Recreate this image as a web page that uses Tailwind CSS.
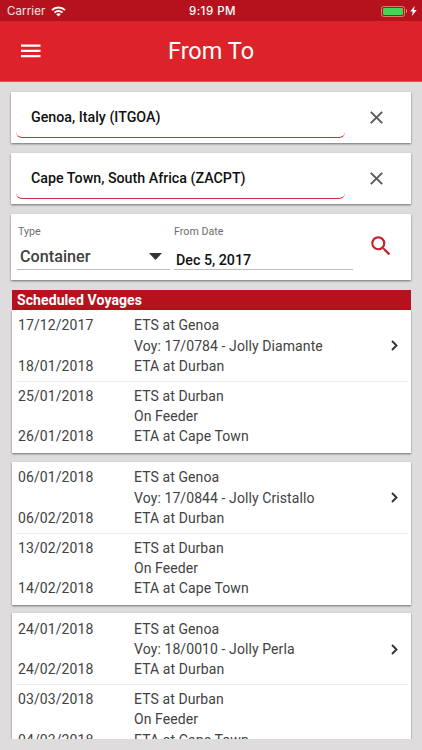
<!DOCTYPE html>
<html lang="en">
<head>
<meta charset="utf-8">
<title>From To</title>
<script src="https://cdn.jsdelivr.net/npm/@tailwindcss/browser@4"></script>
</head>
<body class="w-[422px] h-[750px] overflow-hidden bg-[#dfdcde] font-['Roboto',sans-serif] text-[#424242] flex flex-col">
  <div class="h-[21px] shrink-0 bg-[#b6121e] text-white grid grid-cols-3 items-center pl-[7px] pr-[5px] font-['Inter',sans-serif] text-[11.5px] leading-[21px]">
    <div class="flex items-center gap-[6px] text-white/90">
      <span class="tracking-[0.1px] pt-px">Carrier</span>
      <svg class="w-[15px] h-[11px]" viewBox="0 0 15 11" fill="none" stroke="#fff"><path d="M1 4.1a9.3 9.3 0 0 1 13 0" stroke-width="2"/><path d="M3.5 6.6a5.8 5.8 0 0 1 8 0" stroke-width="1.9"/><path d="M7.5 10.6 5.2 8.3a3.3 3.3 0 0 1 4.6 0z" fill="#fff" stroke="none"/></svg>
    </div>
    <span class="text-center font-medium tracking-[0.5px] pt-px pl-px">9:19 PM</span>
    <div class="flex items-center justify-end">
      <div class="w-[24px] h-[11px] rounded-[2.5px] border border-[#d9806a] p-px"><div class="h-full w-full rounded-[1px] bg-[#47d456]"></div></div>
      <div class="w-[1.5px] h-[4px] ml-px rounded-r bg-[#df8a8f]"></div>
      <svg class="w-[7px] h-[10px] ml-[3px]" viewBox="0 0 7 10" fill="#fff"><path d="M4.6 0 0.3 5.6h2.5L1.9 10 6.7 4.1H4z"/></svg>
    </div>
  </div>
  <header class="h-[61px] shrink-0 bg-[#db2329] border-b border-[#cf5a5e] grid grid-cols-[1fr_auto_1fr] items-center px-[21px] text-white">
    <svg class="w-[20px] h-[14px]" viewBox="0 0 20 14" fill="#fff"><path d="M0 .5h19.5v2.2H0zM0 5.8h19.5V8H0zM0 11.1h19.5v2.2H0z"/></svg>
    <h1 class="text-[23.5px] leading-[60px]">From To</h1>
  </header>

  <main class="flex-1 pt-[10px] pl-[11px] pr-[11px] flex flex-col">
    <section class="h-[51px] shrink-0 w-[400px] bg-white shadow-[0_1px_2px_rgba(0,0,0,0.5)] flex pl-[5px] pt-[4px]">
      <div class="w-[329px] h-[42px] rounded-[6px] border-b border-[#c8303c] pl-[15px] text-[14.25px] font-medium leading-[42px] text-[#111]">Genoa, Italy (ITGOA)</div>
      <svg class="w-[13px] h-[13px] ml-[24.5px] mt-[15px]" viewBox="0 0 13 13" stroke="#585858" stroke-width="1.9"><path d="m.8.8 11.4 11.4M12.2.8.8 12.2"/></svg>
    </section>
    <section class="h-[51px] shrink-0 w-[400px] mt-[10px] bg-white shadow-[0_1px_2px_rgba(0,0,0,0.5)] flex pl-[5px] pt-[4px]">
      <div class="w-[329px] h-[42px] rounded-[6px] border-b border-[#c8303c] pl-[15px] text-[14.25px] font-medium leading-[42px] text-[#111]">Cape Town, South Africa (ZACPT)</div>
      <svg class="w-[13px] h-[13px] ml-[24.5px] mt-[15px]" viewBox="0 0 13 13" stroke="#585858" stroke-width="1.9"><path d="m.8.8 11.4 11.4M12.2.8.8 12.2"/></svg>
    </section>
    <section class="h-[66px] shrink-0 w-[400px] mt-[10px] bg-white shadow-[0_1px_2px_rgba(0,0,0,0.5)] flex pl-[6px]">
      <div class="w-[153px] h-[56px] border-b border-[#bdbdbd] pl-px pt-[11px]">
        <div class="text-[10.7px] leading-[13px] text-[#6e6e6e]">Type</div>
        <div class="flex items-center justify-between pl-[2px] pr-[8px] mt-[8px]">
          <span class="text-[16.2px] leading-[20px] font-medium pt-px">Container</span>
          <svg class="w-[13px] h-[7px]" viewBox="0 0 13 7" fill="#333"><path d="M0 0h13L6.5 7z"/></svg>
        </div>
      </div>
      <div class="w-[179px] h-[56px] ml-[4px] border-b border-[#bdbdbd] pt-[11px]">
        <div class="text-[10.7px] leading-[13px] text-[#6e6e6e]">From Date</div>
        <div class="text-[14.25px] leading-[18px] mt-[13px] pl-[2px] font-medium text-[#111]">Dec 5, 2017</div>
      </div>
      <svg class="w-[26px] h-[26px] ml-[15px] mt-[19px]" viewBox="0 0 24 24" fill="#c5202b"><path d="M15.5 14h-.79l-.28-.27A6.471 6.471 0 0 0 16 9.5 6.5 6.5 0 1 0 9.5 16c1.61 0 3.09-.59 4.23-1.57l.27.28v.79l5 4.99L20.49 19l-4.99-5zm-6 0C7.01 14 5 11.99 5 9.5S7.01 5 9.5 5 14 7.01 14 9.5 11.99 14 9.5 14z"/></svg>
    </section>

    <div class="h-[449px] shrink-0 w-[404px] mt-[10px] -ml-[3px] pl-[4px] overflow-hidden text-[14px] leading-[20.33px] tracking-[0.09px]">
      <h2 class="w-[399px] h-[20px] bg-[#b6121e] pl-[5px] text-[14px] leading-[20px] font-bold text-white">Scheduled Voyages</h2>
      <article class="w-[399px] h-[143px] bg-white shadow-[0_1px_2px_rgba(0,0,0,0.5)] px-[3px]">
        <div class="grid grid-cols-[116px_1fr_17px] h-[72px] pl-[3px] pt-[5.4px] border-b border-[#efefef]">
          <div class="flex flex-col justify-between h-[61px]"><span>17/12/2017</span><span>18/01/2018</span></div>
          <div><p>ETS at Genoa</p><p>Voy: 17/0784 - Jolly Diamante</p><p>ETA at Durban</p></div>
          <svg class="w-[7px] h-[11px] mt-[25px]" viewBox="0 0 7 11" fill="none" stroke="#333" stroke-width="1.9"><path d="m1 1 4.5 4.5L1 10"/></svg>
        </div>
        <div class="grid grid-cols-[116px_1fr] pl-[3px] pt-[3.7px]">
          <div class="flex flex-col justify-between h-[61px]"><span>25/01/2018</span><span>26/01/2018</span></div>
          <div><p>ETS at Durban</p><p>On Feeder</p><p>ETA at Cape Town</p></div>
        </div>
      </article>
      <article class="w-[399px] h-[143px] mt-[9px] bg-white shadow-[0_1px_2px_rgba(0,0,0,0.5)] px-[3px]">
        <div class="grid grid-cols-[116px_1fr_17px] h-[72px] pl-[3px] pt-[5.4px] border-b border-[#efefef]">
          <div class="flex flex-col justify-between h-[61px]"><span>06/01/2018</span><span>06/02/2018</span></div>
          <div><p>ETS at Genoa</p><p>Voy: 17/0844 - Jolly Cristallo</p><p>ETA at Durban</p></div>
          <svg class="w-[7px] h-[11px] mt-[25px]" viewBox="0 0 7 11" fill="none" stroke="#333" stroke-width="1.9"><path d="m1 1 4.5 4.5L1 10"/></svg>
        </div>
        <div class="grid grid-cols-[116px_1fr] pl-[3px] pt-[3.7px]">
          <div class="flex flex-col justify-between h-[61px]"><span>13/02/2018</span><span>14/02/2018</span></div>
          <div><p>ETS at Durban</p><p>On Feeder</p><p>ETA at Cape Town</p></div>
        </div>
      </article>
      <article class="w-[399px] h-[143px] mt-[8px] bg-white shadow-[0_1px_2px_rgba(0,0,0,0.5)] px-[3px]">
        <div class="grid grid-cols-[116px_1fr_17px] h-[72px] pl-[3px] pt-[5.7px] border-b border-[#efefef]">
          <div class="flex flex-col justify-between h-[61px]"><span>24/01/2018</span><span>24/02/2018</span></div>
          <div><p>ETS at Genoa</p><p>Voy: 18/0010 - Jolly Perla</p><p>ETA at Durban</p></div>
          <svg class="w-[7px] h-[11px] mt-[25px]" viewBox="0 0 7 11" fill="none" stroke="#333" stroke-width="1.9"><path d="m1 1 4.5 4.5L1 10"/></svg>
        </div>
        <div class="grid grid-cols-[116px_1fr] pl-[3px] pt-[4px]">
          <div class="flex flex-col justify-between h-[61px]"><span>03/03/2018</span><span>04/03/2018</span></div>
          <div><p>ETS at Durban</p><p>On Feeder</p><p>ETA at Cape Town</p></div>
        </div>
      </article>
    </div>
  </main>
</body>
</html>
